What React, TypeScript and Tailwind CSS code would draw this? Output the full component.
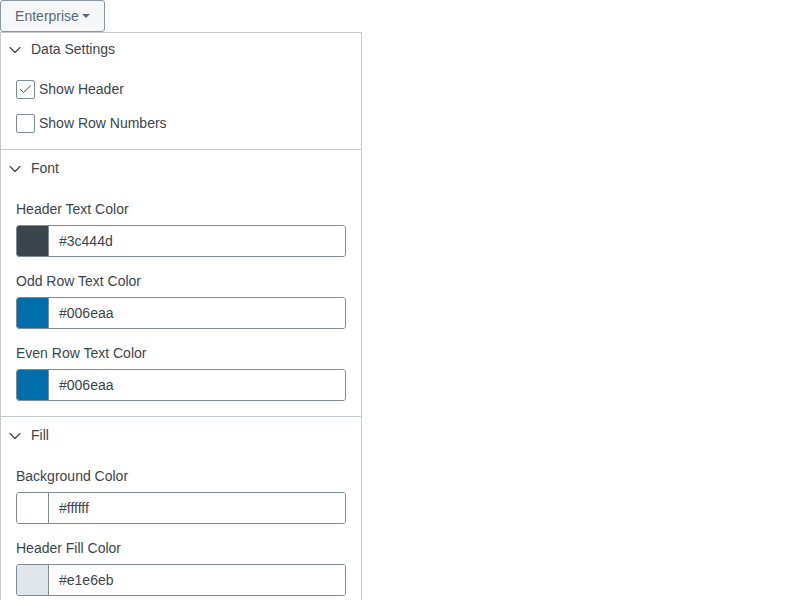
import { ChevronDown, Check } from "lucide-react";

interface ColorField {
  label: string;
  value: string;
}

function SectionHeader({ title, first }: { title: string; first?: boolean }) {
  return (
    <div className={`flex items-center pl-[4px] ${first ? "h-[33px]" : "h-[34px] pt-[1px]"}`}>
      <ChevronDown size={20} strokeWidth={1.4} className="text-[#3c444d]" />
      <span className="ml-[6px] text-[14px]">{title}</span>
    </div>
  );
}

function Checkbox({ label, checked }: { label: string; checked?: boolean }) {
  return (
    <div className="flex items-center h-[34px] px-[15px]">
      <div className="w-[19px] h-[19px] border border-[#7d8b99] rounded-[2px] bg-white flex items-center justify-center">
        {checked && <Check size={15} strokeWidth={1.6} className="text-[#3c444d]" />}
      </div>
      <span className="ml-[4px] text-[14px]">{label}</span>
    </div>
  );
}

function ColorInput({ field }: { field: ColorField }) {
  return (
    <div className="px-[15px] pb-[8px]">
      <div className="h-[32px] flex items-center text-[14px]">{field.label}</div>
      <div className="flex h-[32px] border border-[#7d8b99] rounded-[3px] overflow-hidden">
        <div
          className="w-[32px] h-full border-r border-[#7d8b99]"
          style={{ backgroundColor: field.value }}
        />
        <div className="flex-1 flex items-center pl-[10px] text-[14px] bg-white">{field.value}</div>
      </div>
    </div>
  );
}

const fontFields: ColorField[] = [
  { label: "Header Text Color", value: "#3c444d" },
  { label: "Odd Row Text Color", value: "#006eaa" },
  { label: "Even Row Text Color", value: "#006eaa" },
];

const fillFields: ColorField[] = [
  { label: "Background Color", value: "#ffffff" },
  { label: "Header Fill Color", value: "#e1e6eb" },
];

export default function App() {
  return (
    <div className="w-[800px] h-[600px] overflow-hidden bg-white text-[#3c444d] font-['Liberation_Sans',Arial,sans-serif]">
      <button className="h-[32px] w-[105px] flex items-center justify-center gap-[3px] border border-[#8a96a3] rounded-[3px] bg-[#f5f7f9] text-[14px] text-[#5c6773]">
        Enterprise
        <span className="w-0 h-0 border-l-[4px] border-r-[4px] border-t-[4px] border-l-transparent border-r-transparent border-t-[#5c6773]" />
      </button>
      <div className="w-[362px] border-l border-r border-t border-[#c8c8c8]">
        <div className="border-b border-[#c1c9d2] pb-[9px]">
          <SectionHeader title="Data Settings" first />
          <div className="pt-[6px]">
            <Checkbox label="Show Header" checked />
            <Checkbox label="Show Row Numbers" />
          </div>
        </div>
        <div className="border-b border-[#c1c9d2] pt-[1px] pb-[7px]">
          <SectionHeader title="Font" />
          <div className="pt-[8px]">
            {fontFields.map((f) => (
              <ColorInput key={f.label} field={f} />
            ))}
          </div>
        </div>
        <div className="pt-[1px]">
          <SectionHeader title="Fill" />
          <div className="pt-[8px]">
            {fillFields.map((f) => (
              <ColorInput key={f.label} field={f} />
            ))}
          </div>
        </div>
      </div>
    </div>
  );
}
